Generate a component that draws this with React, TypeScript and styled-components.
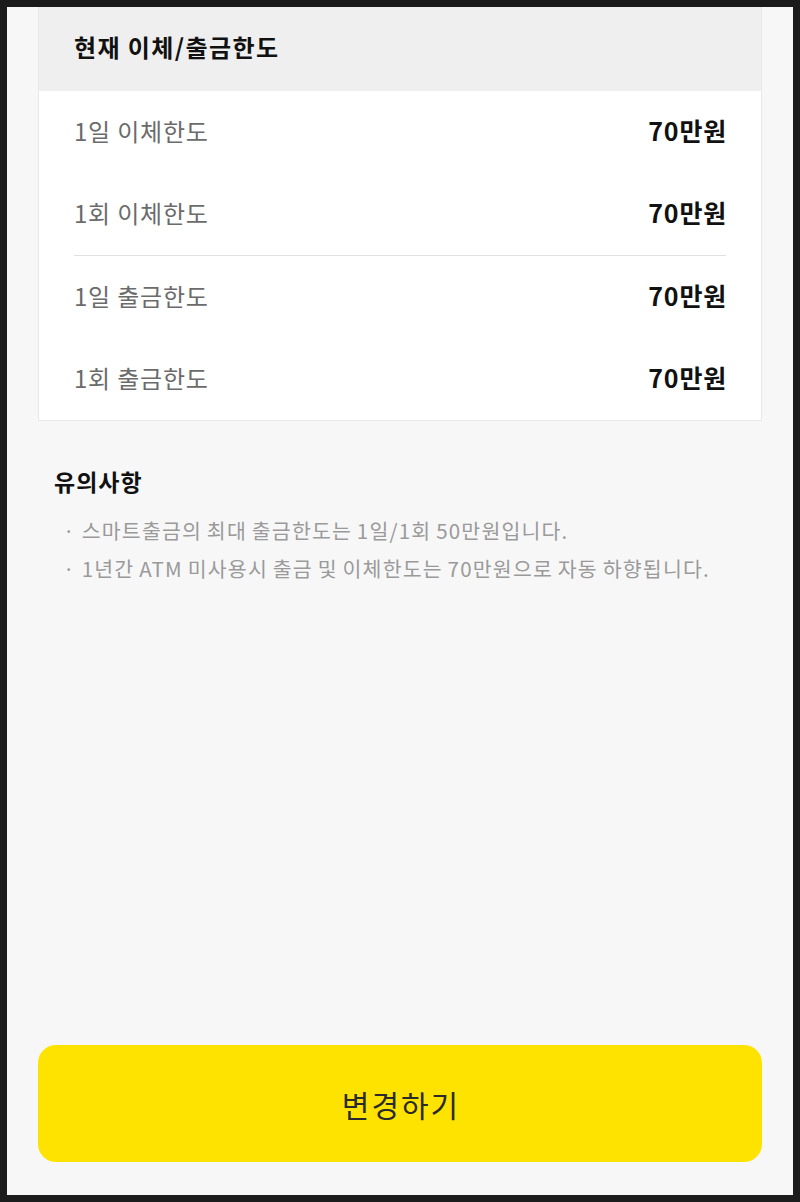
import React from 'react'
import styled, { createGlobalStyle } from 'styled-components'

const GlobalStyle = createGlobalStyle`
    html, body {
        margin: 0;
        padding: 0;
        background: #1b1b1b;
    }
    body {
        font-family: "Noto Sans CJK KR", "Noto Sans", sans-serif;
    }
`;

type Limit = { label: string; value: string }

const groups: Limit[][] = [
    [
        { label: '1일 이체한도', value: '70만원' },
        { label: '1회 이체한도', value: '70만원' },
    ],
    [
        { label: '1일 출금한도', value: '70만원' },
        { label: '1회 출금한도', value: '70만원' },
    ],
]

const notes = [
    '스마트출금의 최대 출금한도는 1일/1회 50만원입니다.',
    '1년간 ATM 미사용시 출금 및 이체한도는 70만원으로 자동 하향됩니다.',
]

const App: React.FC = () => {
    return (
        <>
            <GlobalStyle />
            <Screen>
                <Card>
                    <CardHeader>현재 이체/출금한도</CardHeader>
                    <CardBody>
                        {groups.map((group, i) => (
                            <Group key={i} divided={i > 0}>
                                {group.map(item => (
                                    <Row key={item.label}>
                                        <Label>{item.label}</Label>
                                        <Value>{item.value}</Value>
                                    </Row>
                                ))}
                            </Group>
                        ))}
                    </CardBody>
                </Card>
                <Notice>
                    <NoticeTitle>유의사항</NoticeTitle>
                    <NoticeList>
                        {notes.map(n => (
                            <NoticeItem key={n}>{n}</NoticeItem>
                        ))}
                    </NoticeList>
                </Notice>
                <SubmitButton>변경하기</SubmitButton>
            </Screen>
        </>
    )
}

const Screen = styled.div`
    margin: 7px;
    height: 1188px;
    background: #f7f7f7;
    display: flex;
    flex-direction: column;
    padding: 0 31px 33px;
    box-sizing: border-box;
    overflow: hidden;
`;

const Card = styled.section`
    background: #fff;
    border: 1px solid #e9e9e9;
    border-top: none;
`;

const CardHeader = styled.h2`
    margin: 0;
    height: 84px;
    display: flex;
    align-items: center;
    padding: 0 35px 5px;
    box-sizing: border-box;
    background: #efefef;
    font-size: 24px;
    font-weight: 700;
    color: #111;
    letter-spacing: 1.4px;
`;

const CardBody = styled.div`
    padding: 0 35px;
`;

const Group = styled.div<{ divided?: boolean }>`
    border-top: ${props => (props.divided ? '1px solid #e1e1e1' : 'none')};
`;

const Row = styled.div`
    height: 82px;
    display: flex;
    align-items: center;
    justify-content: space-between;
    padding-bottom: 4px;
    box-sizing: border-box;
`;

const Label = styled.span`
    font-size: 24px;
    color: #6b6b6b;
    font-weight: 400;
    letter-spacing: 0.8px;
`;

const Value = styled.span`
    font-size: 25px;
    color: #111;
    font-weight: 700;
    letter-spacing: 0.8px;
    margin-right: -1px;
`;

const Notice = styled.div`
    padding: 43px 16px 0;
`;

const NoticeTitle = styled.h3`
    margin: 0 0 13px;
    font-size: 23px;
    font-weight: 700;
    color: #111;
    letter-spacing: 1px;
`;

const NoticeList = styled.ul`
    list-style: none;
    margin: 0;
    padding: 0 0 0 9px;
`;

const NoticeItem = styled.li`
    font-size: 20.5px;
    line-height: 38px;
    color: #9a9a9a;
    letter-spacing: 1.2px;
    word-spacing: -1px;
    &::before {
        content: '·';
        margin-right: 6px;
    }
`;

const SubmitButton = styled.button`
    margin-top: auto;
    height: 117px;
    width: 100%;
    border: none;
    border-radius: 18px;
    background: #ffe300;
    font-family: inherit;
    font-size: 30px;
    font-weight: 400;
    color: #2a2a2a;
    letter-spacing: 2px;
    padding: 0 0 0 2px;
`;

export default App
